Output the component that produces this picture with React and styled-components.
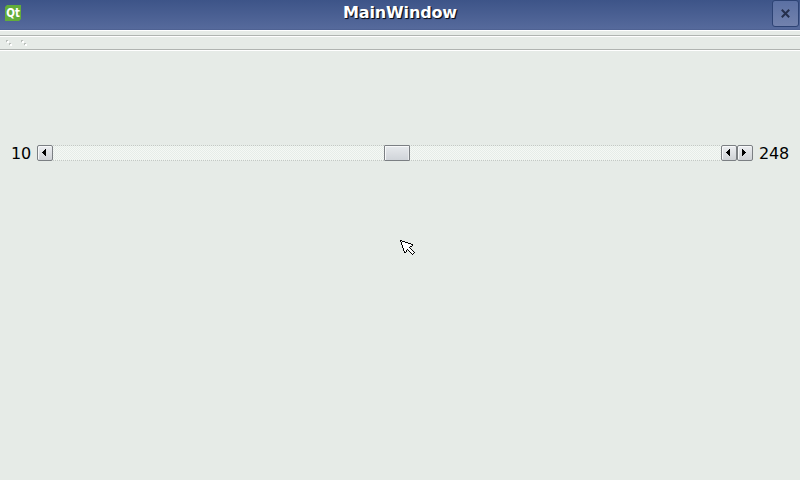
import React from "react";
import styled, { createGlobalStyle } from "styled-components";

const GlobalStyle = createGlobalStyle`
  * { box-sizing: border-box; }
  body { margin: 0; overflow: hidden; }
`;

const Window = styled.div`
  width: 800px;
  height: 480px;
  display: flex;
  flex-direction: column;
  background: #e6ebe7;
  color: #000;
  font: 16px/16px "DejaVu Sans", sans-serif;
`;

const TitleBar = styled.header`
  height: 30px;
  flex: none;
  display: grid;
  grid-template-columns: 28px 1fr 28px;
  background: linear-gradient(#3d5488, #566a9c);
  border-bottom: 1px solid #4f6293;
`;

const Logo = styled.svg`
  display: block;
  width: 16px;
  height: 16px;
  margin: 5px 0 0 5px;
  overflow: visible;
`;

const Title = styled.h1`
  margin: 0;
  font-size: 16px;
  line-height: 26px;
  letter-spacing: -0.15px;
  font-weight: bold;
  text-align: center;
  color: #fff;
  text-shadow: 1px 1px 0 #0c1220, 1px 1px 1px #141c30;
`;

const CloseButton = styled.button`
  width: 27px;
  height: 27px;
  padding: 0;
  display: flex;
  align-items: center;
  justify-content: center;
  border: 1px solid #2d4374;
  border-radius: 3px;
  background: linear-gradient(#5b70a3, #7282ad);
`;

const MenuStrip = styled.div`
  height: 6px;
  flex: none;
  border-top: 1px solid #fff;
  border-bottom: 1px solid #b0b4b1;
`;

const ToolBar = styled.div`
  height: 14px;
  flex: none;
  display: flex;
  gap: 9px;
  padding: 3px 0 0 6px;
  border-top: 1px solid #fff;
  border-bottom: 1px solid #b0b4b1;
`;

const Content = styled.main`
  flex: 1;
  border-top: 1px solid #fff;
  padding-top: 94px;
`;

const SliderRow = styled.div`
  display: flex;
  align-items: center;
  height: 16px;
  padding: 0 11px;
`;

const Value = styled.span`
  width: ${(p) => p.$width}px;
  padding-top: 2px;
  letter-spacing: -0.18px;
  white-space: nowrap;
`;

const ScrollBar = styled.div`
  display: flex;
  width: 716px;
  height: 16px;
  margin-right: 6px;
`;

const ArrowButton = styled.button`
  width: 16px;
  height: 16px;
  flex: none;
  padding: 0;
  display: flex;
  align-items: center;
  justify-content: center;
  border: 1px solid #7b7f83;
  border-radius: 2px;
  background: linear-gradient(#eceef1, #cfd2d6);
  box-shadow: inset 1px 1px 0 #f7f8f9;
`;

const Groove = styled.div`
  flex: 1;
  height: 16px;
  display: flex;
  background:
    repeating-linear-gradient(90deg, #c3c8c4 0 1px, #e9eeea 1px 2px) top / 100% 1px no-repeat,
    repeating-linear-gradient(90deg, #c3c8c4 0 1px, #e9eeea 1px 2px) bottom / 100% 1px no-repeat,
    repeating-conic-gradient(#f5f8f5 0 25%, #e6ede8 0 50%) 0 0 / 2px 2px;
`;

const Thumb = styled.div`
  width: 26px;
  height: 16px;
  margin-left: 331px;
  border: 1px solid #7b7f83;
  border-radius: 1px;
  background: linear-gradient(#e7eaed, #d0d4d9);
  box-shadow: inset 1px 1px 0 #f7f8f9, inset -1px 0 0 #e9ebed;
`;

const Pointer = styled.svg`
  position: absolute;
  left: 400px;
  top: 240px;
`;

const QtLogo = () => (
  <Logo viewBox="0 0 16 16">
    <path d="M2 0H16V14L14 16H0V2Z" fill="#62ad3a" />
    <text transform="translate(1.2 12) scale(0.82 1)" fill="#fff"
      fontFamily="DejaVu Sans" fontWeight="bold" fontSize="12.5">Qt</text>
  </Logo>
);

const Grip = () => (
  <svg width="6" height="6" shapeRendering="crispEdges">
    <path d="M1 1h2v2h-2zM4 4h2v2h-2z" fill="#fff" />
    <path d="M0 0h2v1h-1v1h-1zM3 3h2v1h-1v1h-1z" fill="#b9beba" />
  </svg>
);

const Arrow = ({ right }) => (
  <svg width="14" height="14" shapeRendering="crispEdges">
    <path
      transform={right ? "translate(12 0) scale(-1 1)" : undefined}
      d="M4 6h1v1h-1zM5 5h1v3h-1zM6 4h1v5h-1zM7 3h1v7h-1z"
    />
  </svg>
);

export default function App() {
  return (
    <>
      <GlobalStyle />
      <Window>
        <TitleBar>
          <QtLogo />
          <Title>MainWindow</Title>
          <CloseButton aria-label="Close">
            <svg width="9" height="9" viewBox="0 0 9 9">
              <path d="M.8.8l7.4 7.4M8.2.8L.8 8.2" stroke="#25304d" strokeWidth="2" />
            </svg>
          </CloseButton>
        </TitleBar>
        <MenuStrip />
        <ToolBar><Grip /><Grip /></ToolBar>
        <Content>
          <SliderRow>
            <Value $width={26}>10</Value>
            <ScrollBar>
              <ArrowButton aria-label="Decrease"><Arrow /></ArrowButton>
              <Groove><Thumb /></Groove>
              <ArrowButton aria-label="Decrease"><Arrow /></ArrowButton>
              <ArrowButton aria-label="Increase"><Arrow right /></ArrowButton>
            </ScrollBar>
            <Value $width={30}>248</Value>
          </SliderRow>
        </Content>
      </Window>
      <Pointer width="16" height="16" shapeRendering="crispEdges">
        <path d="M.5.5L12.5 4.5V5.5L9.5 7.5L14.5 12.5L12.5 14.5L7.5 9.5L5.5 12.5H4.5Z" fill="#fff" stroke="#000" />
      </Pointer>
    </>
  );
}
